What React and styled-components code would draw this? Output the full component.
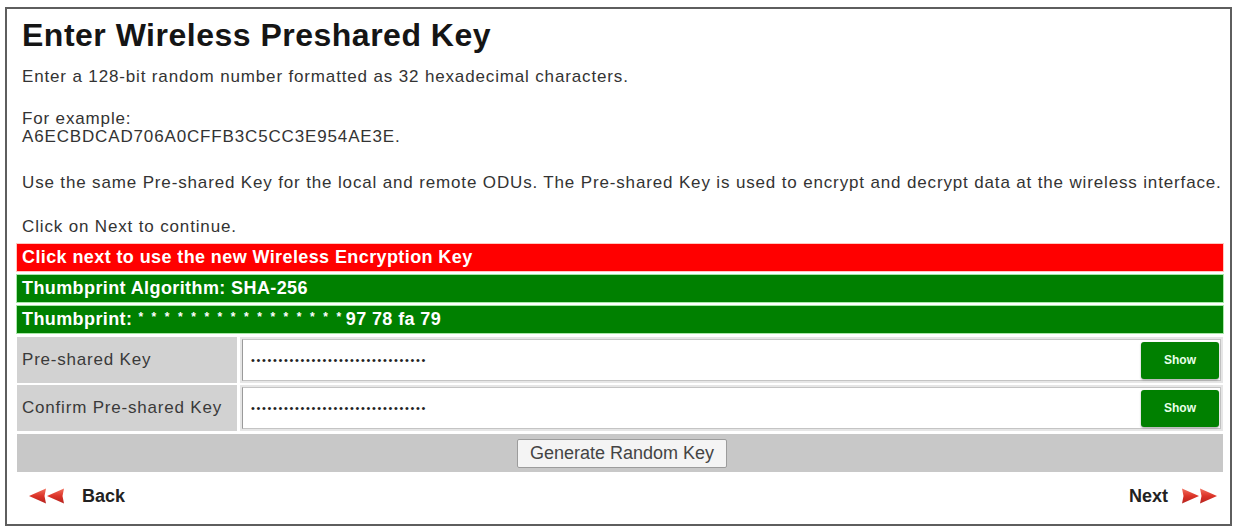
import styled, { createGlobalStyle } from 'styled-components';

const GlobalStyle = createGlobalStyle`
  html, body {
    margin: 0;
    padding: 0;
    background: #ffffff;
  }
  body {
    font-family: "Liberation Sans", Arial, sans-serif;
    color: #2a2a2a;
  }
`;

const Frame = styled.div`
  box-sizing: border-box;
  width: 1227px;
  height: 519px;
  margin: 7px 0 0 5px;
  border: 2px solid #5e5e5e;
  padding: 8px 7px 0 10px;
  display: flex;
  flex-direction: column;
`;

const Title = styled.h1`
  margin: 0;
  padding-left: 5px;
  font-size: 32px;
  line-height: 36px;
  font-weight: bold;
  letter-spacing: 0.5px;
  color: #151515;
`;

const Text = styled.p`
  margin: ${(p) => p.$top || 0}px 0 0;
  padding-left: 5px;
  font-size: 17px;
  line-height: 18px;
  letter-spacing: 0.85px;
  color: #333;
`;

const Bars = styled.div`
  display: flex;
  flex-direction: column;
  gap: 4px;
  margin-top: 8px;
`;

const Bar = styled.div`
  box-sizing: border-box;
  height: 27px;
  padding-left: 5px;
  display: flex;
  align-items: center;
  background: ${(p) => (p.$tone === 'red' ? '#ff0000' : '#008000')};
  box-shadow: 0 0 0 1px ${(p) => (p.$tone === 'red' ? '#ffc8c0' : '#a8e8a8')};
  color: #ffffff;
  font-size: 18px;
  font-weight: bold;
  letter-spacing: 0.4px;
`;

const Stars = styled.span`
  font-size: 12px;
  letter-spacing: 2.6px;
  margin: 0 2px 0 6px;
  position: relative;
  top: -3px;
`;

const Form = styled.div`
  display: flex;
  flex-direction: column;
  gap: 2px;
  margin-top: 4px;
`;

const Row = styled.div`
  display: grid;
  grid-template-columns: 220px 1fr;
  gap: 3px;
  height: 46px;
`;

const Label = styled.div`
  background: #d2d2d2;
  display: flex;
  align-items: center;
  padding-left: 5px;
  font-size: 17px;
  letter-spacing: 0.8px;
  color: #3a3a3a;
`;

const Field = styled.div`
  box-sizing: border-box;
  background: #e6e6e6;
  padding: 2px;
  display: flex;
`;

const InputBox = styled.div`
  box-sizing: border-box;
  flex: 1;
  display: flex;
  align-items: center;
  justify-content: space-between;
  background: #ffffff;
  border: 1px solid #c4c4c4;
  border-left-color: #9a9a9a;
  padding: 0 1px 0 8px;
`;

const Dots = styled.span`
  font-size: 11px;
  letter-spacing: 1.65px;
  color: #222;
`;

const ShowButton = styled.button`
  width: 78px;
  height: 37px;
  border: none;
  border-radius: 3px;
  background: #008000;
  box-shadow: 0 1px 2px rgba(0, 0, 0, 0.35);
  color: #e8ffe8;
  font-family: "Liberation Sans", Arial, sans-serif;
  font-size: 12px;
  font-weight: bold;
  cursor: pointer;
`;

const ActionRow = styled.div`
  height: 38px;
  background: #c8c8c8;
  display: flex;
  align-items: center;
  justify-content: center;
  margin-top: 1px;
`;

const GenerateButton = styled.button`
  height: 29px;
  padding: 0 12px;
  background: #f4f4f4;
  border: 1px solid #9c9c9c;
  border-radius: 2px;
  font-family: "Liberation Sans", Arial, sans-serif;
  font-size: 18px;
  color: #444;
  cursor: pointer;
  transform: translateX(2px);
`;

const Nav = styled.div`
  display: flex;
  justify-content: space-between;
  align-items: center;
  padding: 0 5px 0 11px;
  height: 48px;
`;

const NavLink = styled.a`
  display: flex;
  align-items: center;
  gap: ${(p) => (p.$next ? 12 : 16)}px;
  font-size: 18px;
  font-weight: bold;
  color: #222;
  text-decoration: none;
  cursor: pointer;
`;

function Arrows({ flip }) {
  const id = flip ? 'arrowNext' : 'arrowBack';
  return (
    <svg
      width="38"
      height="18"
      viewBox="0 0 38 18"
      style={flip ? { transform: 'scaleX(-1)' } : undefined}
    >
      <defs>
        <linearGradient id={id} x1="0" y1="0" x2="0" y2="1">
          <stop offset="0" stopColor="#f2705e" />
          <stop offset="0.5" stopColor="#dc3328" />
          <stop offset="1" stopColor="#b5231e" />
        </linearGradient>
      </defs>
      <path d="M1 9 L18 1.5 L16.5 9 L18 16.5 Z" fill={`url(#${id})`} />
      <path d="M19 9 L36 1.5 L34.5 9 L36 16.5 Z" fill={`url(#${id})`} />
    </svg>
  );
}

function KeyRow({ label }) {
  return (
    <Row>
      <Label>{label}</Label>
      <Field>
        <InputBox>
          <Dots>{'•'.repeat(32)}</Dots>
          <ShowButton type="button">Show</ShowButton>
        </InputBox>
      </Field>
    </Row>
  );
}

export default function App() {
  return (
    <>
      <GlobalStyle />
      <Frame>
        <Title>Enter Wireless Preshared Key</Title>
        <Text $top={15}>
          Enter a 128-bit random number formatted as 32 hexadecimal characters.
        </Text>
        <Text $top={24}>
          For example:
          <br />
          A6ECBDCAD706A0CFFB3C5CC3E954AE3E.
        </Text>
        <Text $top={28}>
          Use the same Pre-shared Key for the local and remote ODUs. The Pre-shared Key is used to
          encrypt and decrypt data at the wireless interface.
        </Text>
        <Text $top={26}>Click on Next to continue.</Text>
        <Bars>
          <Bar $tone="red">Click next to use the new Wireless Encryption Key</Bar>
          <Bar>Thumbprint Algorithm: SHA-256</Bar>
          <Bar>
            Thumbprint:<Stars>* * * * * * * * * * * * * * * *</Stars>97 78 fa 79
          </Bar>
        </Bars>
        <Form>
          <KeyRow label="Pre-shared Key" />
          <KeyRow label="Confirm Pre-shared Key" />
          <ActionRow>
            <GenerateButton type="button">Generate Random Key</GenerateButton>
          </ActionRow>
        </Form>
        <Nav>
          <NavLink>
            <Arrows />
            Back
          </NavLink>
          <NavLink $next>
            Next
            <Arrows flip />
          </NavLink>
        </Nav>
      </Frame>
    </>
  );
}
